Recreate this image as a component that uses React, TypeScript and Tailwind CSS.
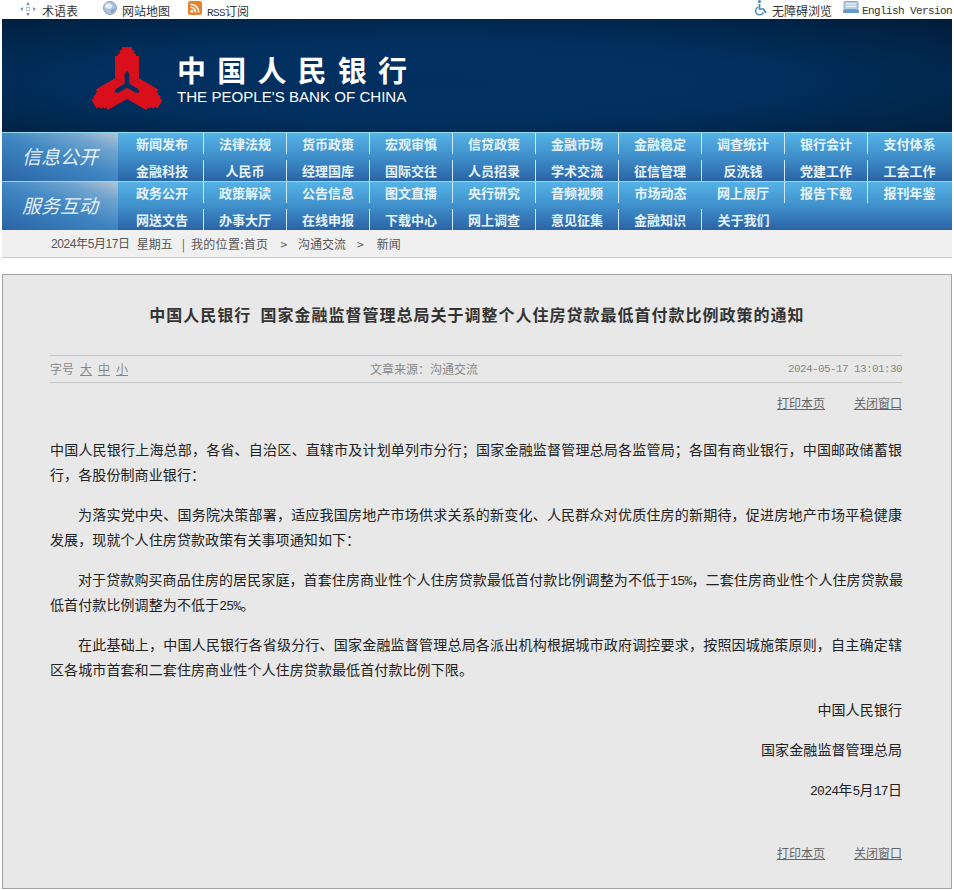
import React from 'react';

type NavCell = { text: string; line?: boolean };

const cjk = "font-['Noto_Sans_CJK_SC',sans-serif]";
const mono = "font-['Liberation_Mono',monospace] text-[11px] tracking-[-0.6px]";

const row1Top = ['新闻发布', '法律法规', '货币政策', '宏观审慎', '信贷政策', '金融市场', '金融稳定', '调查统计', '银行会计', '支付体系'];
const row1Bottom = ['金融科技', '人民币', '经理国库', '国际交往', '人员招录', '学术交流', '征信管理', '反洗钱', '党建工作', '工会工作'];
const row2Top = ['政务公开', '政策解读', '公告信息', '图文直播', '央行研究', '音频视频', '市场动态', '网上展厅', '报告下载', '报刊年鉴'];
const row2Bottom = ['网送文告', '办事大厅', '在线申报', '下载中心', '网上调查', '意见征集', '金融知识', '关于我们', '', ''];

const toCells = (items: string[], noLine: number[] = []): NavCell[] =>
  items.map((text, i) => ({ text, line: i < 9 && !noLine.includes(i) }));

const paragraphs = [
  {
    indent: false,
    lines: [
      '中国人民银行上海总部，各省、自治区、直辖市及计划单列市分行；国家金融监督管理总局各监管局；各国有商业银行，中国邮政储蓄银',
      '行，各股份制商业银行：',
    ],
  },
  {
    indent: true,
    lines: [
      '为落实党中央、国务院决策部署，适应我国房地产市场供求关系的新变化、人民群众对优质住房的新期待，促进房地产市场平稳健康',
      '发展，现就个人住房贷款政策有关事项通知如下：',
    ],
  },
  {
    indent: true,
    lines: [
      '对于贷款购买商品住房的居民家庭，首套住房商业性个人住房贷款最低首付款比例调整为不低于15%，二套住房商业性个人住房贷款最',
      '低首付款比例调整为不低于25%。',
    ],
  },
  {
    indent: true,
    lines: [
      '在此基础上，中国人民银行各省级分行、国家金融监督管理总局各派出机构根据城市政府调控要求，按照因城施策原则，自主确定辖',
      '区各城市首套和二套住房商业性个人住房贷款最低首付款比例下限。',
    ],
  },
];

// digits in the article are narrower than the CJK text around them
const BodyText = ({ text }: { text: string }) => (
  <>
    {text.split(/(\d+%?)/).map((part, i) =>
      /\d/.test(part) ? (
        <span key={i} className="font-['Liberation_Mono',monospace] text-[13px] leading-[0] tracking-[-0.7px]">
          {part}
        </span>
      ) : (
        part
      )
    )}
  </>
);

const TermIcon = () => (
  <svg width="16" height="14" viewBox="0 0 16 14" className="mt-[2px] shrink-0">
    <path d="M8 0l2 3H6zM8 14l-2-3h4zM0 7l3-2v4zM16 7l-3 2V5z" fill="#7f98b8" />
    <rect x="6.5" y="5.5" width="3" height="3" fill="none" stroke="#b5c4d6" />
  </svg>
);

const GlobeIcon = () => (
  <svg width="14" height="14" viewBox="0 0 14 14" className="mt-[1px] shrink-0">
    <circle cx="7" cy="7" r="6.5" fill="#a9c3e2" stroke="#8a9db5" />
    <ellipse cx="5.5" cy="5" rx="3.5" ry="2.8" fill="#e6eff8" />
    <path d="M8 9c2-1 3-1 4-2-.3 3-2 5-4 5z" fill="#7d9ec4" />
  </svg>
);

const RssIcon = () => (
  <svg width="14" height="14" viewBox="0 0 14 14" className="mt-[1px] shrink-0">
    <rect width="14" height="14" rx="2.5" fill="#e8812c" />
    <circle cx="3.8" cy="10.2" r="1.5" fill="#fff" />
    <path d="M2.5 6.3a5.2 5.2 0 0 1 5.2 5.2M2.5 3.2a8.3 8.3 0 0 1 8.3 8.3" fill="none" stroke="#fff" strokeWidth="1.6" />
  </svg>
);

const WheelchairIcon = () => (
  <svg width="13" height="16" viewBox="0 0 13 16" className="shrink-0">
    <circle cx="4.5" cy="1.5" r="1.5" fill="#3f85b8" />
    <path d="M4.5 4v5h4l2.5 4" fill="none" stroke="#3f85b8" strokeWidth="1.7" />
    <path d="M3 7.2a4 4 0 1 0 5.4 5" fill="none" stroke="#3f85b8" strokeWidth="1.3" />
  </svg>
);

const EnglishIcon = () => (
  <svg width="16" height="13" viewBox="0 0 16 13" className="mt-[1px] shrink-0">
    <rect x="1" y="0.5" width="14" height="8" rx="1" fill="#b9cfe2" stroke="#8fa5ba" />
    <path d="M3 3h10M3 5.5h10" stroke="#eef4f9" />
    <rect y="8.5" width="16" height="3.5" rx="1" fill="#5f9ccb" />
  </svg>
);

const BankLogo = () => {
  const piece =
    'M-15 -115H15V-105H22V-95H27V-88H36V-21L7 -4V-34L0 -44L-7 -34V-4L-36 -21V-88H-27V-95H-22V-105H-15Z';
  return (
    <svg width="70" height="63" viewBox="-105 -115 210 190" className="shrink-0">
      <path d={piece} fill="#d9101c" />
      <path d={piece} fill="#d9101c" transform="rotate(120)" />
      <path d={piece} fill="#d9101c" transform="rotate(240)" />
    </svg>
  );
};

const NavLine = ({ cells, height }: { cells: NavCell[]; height: string }) => (
  <div className="grid grid-cols-[repeat(10,83px)]">
    {cells.map((cell, i) => (
      <div
        key={i}
        className={`flex items-center justify-center text-[13px] font-bold text-[#e6f3fb] ${height} ${
          cell.line ? 'border-r border-[#cfe9f7]' : ''
        }`}
      >
        {cell.text}
      </div>
    ))}
  </div>
);

const NavRow = ({ label, top, bottom }: { label: string; top: NavCell[]; bottom: NavCell[] }) => (
  <div className="flex h-[49px] border-t border-[#8fdcec] bg-[linear-gradient(180deg,#55b3e6_0%,#3f8fca_50%,#2a63a6_100%)]">
    <div className="flex w-[116px] items-center justify-center bg-[linear-gradient(200deg,#b4c3d2_0%,#6fa3cf_22%,#3f86c2_50%,#2a63a6_100%)] pt-[2px] font-['Liberation_Serif','Noto_Sans_CJK_SC',serif] text-[19px] italic text-[#e3eff8]">
      {label}
    </div>
    <div className="ml-[3px] flex flex-col justify-between">
      <NavLine cells={top} height="h-[21px]" />
      <NavLine cells={bottom} height="h-[21px]" />
    </div>
  </div>
);

const PrintLinks = () => (
  <div className="flex justify-end gap-[29px] text-[12px] leading-[16px] text-[#666] underline">
    <span>打印本页</span>
    <span>关闭窗口</span>
  </div>
);

export default function App() {
  return (
    <div className={`w-[954px] bg-white text-[12px] text-[#333] ${cjk}`}>
      {/* top links */}
      <div className="flex h-[19px] items-start justify-between overflow-hidden pl-[20px] pr-[2px]">
        <div className="flex items-start">
          <TermIcon />
          <span className="ml-[6px] mt-[3px] leading-[16px]">术语表</span>
          <span className="ml-[25px]">
            <GlobeIcon />
          </span>
          <span className="ml-[5px] mt-[3px] leading-[16px]">网站地图</span>
          <span className="ml-[18px]">
            <RssIcon />
          </span>
          <span className="ml-[5px] mt-[3px] whitespace-nowrap leading-[16px]">
            <span className={mono}>RSS</span>订阅
          </span>
        </div>
        <div className="flex items-start">
          <WheelchairIcon />
          <span className="ml-[4px] mt-[3px] leading-[16px]">无障碍浏览</span>
          <span className="ml-[11px]">
            <EnglishIcon />
          </span>
          <span className={`ml-[3px] mt-[3px] leading-[16px] ${mono}`}>English Version</span>
        </div>
      </div>

      {/* banner */}
      <div className="mx-[2px] flex h-[113px] items-start gap-[15px] bg-[radial-gradient(ellipse_at_45%_55%,#022f60_0%,#01305f_45%,#012447_80%,#011c38_100%)] pl-[90px] pt-[28px]">
        <BankLogo />
        <div className="flex w-[230px] flex-col pt-[4px] text-white">
          <div className={`flex justify-between text-[29px] font-bold leading-[36px] ${cjk}`}>
            <span>中</span>
            <span>国</span>
            <span>人</span>
            <span>民</span>
            <span>银</span>
            <span>行</span>
          </div>
          <div className="mt-[1px] whitespace-nowrap font-['Liberation_Sans',sans-serif] text-[15.1px] leading-[18px]">
            THE PEOPLE&apos;S BANK OF CHINA
          </div>
        </div>
      </div>

      {/* main nav */}
      <div className="mx-[2px]">
        <NavRow label="信息公开" top={toCells(row1Top)} bottom={toCells(row1Bottom)} />
        <NavRow label="服务互动" top={toCells(row2Top, [6])} bottom={toCells(row2Bottom, [7, 8])} />
      </div>

      {/* breadcrumb */}
      <div className="mx-[2px] flex h-[28px] items-center whitespace-pre border-b border-[#ccc] bg-[#f0f0f0] pl-[49px] text-[12px] text-[#555]">
        <span className="font-['Liberation_Sans','Noto_Sans_CJK_SC',sans-serif] tracking-[-0.4px]">2024年5月17日</span>
        <span className="ml-[7px]">星期五</span>
        <span className="ml-[9px]">|</span>
        <span className="ml-[6px] tracking-[0.3px]">我的位置:首页</span>
        <span className="ml-[12px]">&gt;</span>
        <span className="ml-[11px]">沟通交流</span>
        <span className="ml-[11px]">&gt;</span>
        <span className="ml-[13px]">新闻</span>
      </div>

      {/* article */}
      <div className="mx-[2px] mt-[16px] h-[615px] border border-[#a5a5a5] bg-[#e8e8e8] pl-[47px] pr-[49px]">
        <h1 className="pl-[2px] pt-[27px] text-center text-[16px] font-bold leading-[24px] tracking-[1px] text-[#333]">
          中国人民银行&nbsp;&nbsp;国家金融监督管理总局关于调整个人住房贷款最低首付款比例政策的通知
        </h1>

        <div className="mt-[29px] grid h-[28px] grid-cols-[320px_1fr_auto] items-center border-y border-[#c9c9c9] text-[12px] text-[#888]">
          <div className="flex gap-[6px]">
            <span>字号</span>
            <span className="underline">大</span>
            <span className="underline">中</span>
            <span className="underline">小</span>
          </div>
          <div>文章来源：沟通交流</div>
          <div className={`text-right ${mono}`}>2024-05-17 13:01:30</div>
        </div>

        <div className="mt-[12px]">
          <PrintLinks />
        </div>

        <div className="mt-[26px] text-[14px] leading-[25px] tracking-[0.1px] text-[#222]">
          {paragraphs.map((p, i) => (
            <div key={i} className="mb-[15px]">
              {p.lines.map((line, j) => (
                <div
                  key={j}
                  className={`whitespace-nowrap ${p.indent && j === 0 ? 'pl-[28px]' : ''} ${
                    j === 0 ? '[text-align-last:justify]' : ''
                  }`}
                >
                  <BodyText text={line} />
                </div>
              ))}
            </div>
          ))}
          <div className="mb-[15px] text-right">中国人民银行</div>
          <div className="mb-[15px] text-right">国家金融监督管理总局</div>
          <div className="text-right">
            <BodyText text="2024年5月17日" />
          </div>
        </div>

        <div className="mt-[43px]">
          <PrintLinks />
        </div>
      </div>
    </div>
  );
}
